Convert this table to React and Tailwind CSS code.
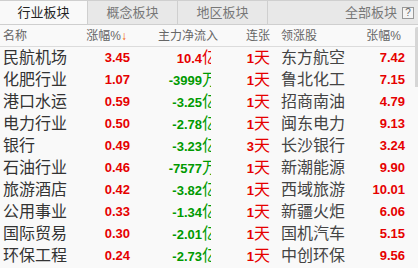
import React from "react";

const rows = [
  ["民航机场", "3.45", "10.4", "亿", "1", "东方航空", "7.42"],
  ["化肥行业", "1.07", "-3999", "万", "1", "鲁北化工", "7.15"],
  ["港口水运", "0.59", "-3.25", "亿", "1", "招商南油", "4.79"],
  ["电力行业", "0.50", "-2.78", "亿", "1", "闽东电力", "9.13"],
  ["银行", "0.49", "-3.23", "亿", "3", "长沙银行", "3.24"],
  ["石油行业", "0.46", "-7577", "万", "1", "新潮能源", "9.90"],
  ["旅游酒店", "0.42", "-3.82", "亿", "1", "西域旅游", "10.01"],
  ["公用事业", "0.33", "-1.34", "亿", "1", "新疆火炬", "6.06"],
  ["国际贸易", "0.30", "-2.01", "亿", "1", "国机汽车", "5.15"],
  ["环保工程", "0.24", "-2.73", "亿", "1", "中创环保", "9.56"],
];

const font = { fontFamily: '"Liberation Sans","Noto Sans CJK SC",sans-serif' };

export default function App() {
  return (
    <div className="relative w-[418px] h-[268px] overflow-hidden bg-[#f9f9f9]" style={font}>
      {/* tabs */}
      <div className="flex h-[25px] border-t border-b border-[#cfcfcf] bg-[#e8e8e8] text-[13px]">
        <div className="w-[88px] flex items-center justify-center bg-[#f9f9f9] text-[#222] border-r border-[#cfcfcf]">行业板块</div>
        <div className="w-[90px] flex items-center justify-center text-[#777] border-r border-[#cfcfcf]">概念板块</div>
        <div className="w-[90px] flex items-center justify-center text-[#777] border-r border-[#cfcfcf]">地区板块</div>
        <div className="flex-1 flex items-center justify-end pr-[4px] text-[#777]">
          <span>全部板块</span>
          <span className="ml-[5px] w-[12px] h-[12px] border border-[#999] flex items-center justify-center text-[10px] leading-none text-[#666] bg-[#f4f4f4]">?</span>
        </div>
      </div>
      {/* header */}
      <div className="flex h-[22px] items-center border-b border-[#dcdcdc] text-[12px] text-[#666] whitespace-nowrap">
        <div className="w-[70px] pl-[3px]">名称</div>
        <div className="w-[60px] text-right pr-[3px]">涨幅%<span className="text-[#f25c05]">↓</span></div>
        <div className="w-[88px] text-right">主力净流入</div>
        <div className="w-[52px] text-right">连张</div>
        <div className="w-[75px] pl-[11px]">领涨股</div>
        <div className="w-[56px] text-right">张幅%</div>
      </div>
      {rows.map((r, i) => (
        <div key={i} className="flex h-[22px] items-center whitespace-nowrap">
          <div className="w-[70px] pl-[3px] text-[16px] text-[#333]">{r[0]}</div>
          <div className="w-[60px] text-right text-[13px] font-bold text-[#e60000]">{r[1]}</div>
          <div className="w-[81px] overflow-hidden">
            <div className={r[2].startsWith("-") ? "-mr-[7px] text-right text-[#009a00]" : "-mr-[7px] text-right text-[#e60000]"}>
              <span className="text-[13px] font-bold">{r[2]}</span>
              <span className="text-[16px]">{r[3]}</span>
            </div>
          </div>
          <div className="w-[59px] text-right text-[#e60000]">
            <span className="text-[13px] font-bold">{r[4]}</span>
            <span className="text-[16px]">天</span>
          </div>
          <div className="w-[75px] pl-[11px] text-[16px] text-[#444]">{r[5]}</div>
          <div className="w-[60px] text-right text-[13px] font-bold text-[#e60000]">{r[6]}</div>
        </div>
      ))}
      <div className="absolute right-0 top-[27px] w-[3px] h-[60px] rounded-tl-[2px] bg-[#d6d6d6]" />
    </div>
  );
}
